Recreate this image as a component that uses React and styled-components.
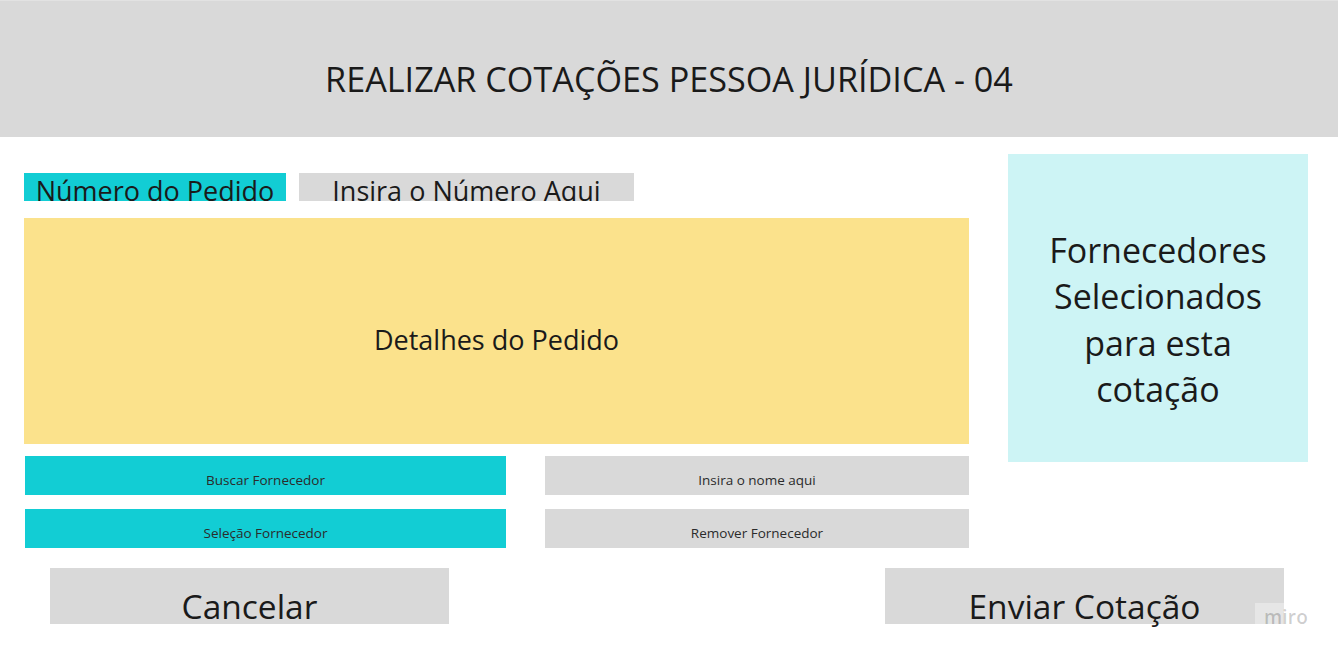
import React from "react";
import styled, { createGlobalStyle } from "styled-components";

const GlobalStyle = createGlobalStyle`
  html, body {
    margin: 0;
    padding: 0;
    background: #ffffff;
  }
  body {
    font-family: "Open Sans", "Noto Sans", sans-serif;
    color: #1a1a1a;
  }
  * { box-sizing: border-box; }
`;

const Page = styled.div`
  position: relative;
  width: 1338px;
  height: 656px;
  overflow: hidden;
  background: #ffffff;
`;

const Header = styled.header`
  height: 137px;
  background: #d9d9d9;
  border-top: 1px solid #e2e2e2;
  padding-top: 61px;
  text-align: center;
  font-size: 34.2px;
  line-height: 1;
  white-space: nowrap;
`;

const Content = styled.div`
  display: flex;
  align-items: flex-start;
  padding-left: 24px;
`;

const LeftColumn = styled.div`
  width: 945px;
  padding-top: 36px;
`;

const TopRow = styled.div`
  display: flex;
  gap: 13px;
  height: 28px;
`;

const Field = styled.div`
  width: ${(p) => p.$width}px;
  height: 28px;
  background: ${(p) => p.$bg};
  overflow: hidden;
  padding-top: 4px;
  font-size: 27px;
  line-height: 1;
  text-align: center;
  white-space: nowrap;
`;

const Details = styled.div`
  margin-top: 17px;
  height: 226px;
  background: #fbe28c;
  padding-top: 108px;
  font-size: 27px;
  line-height: 1;
  text-align: center;
`;

const ActionGrid = styled.div`
  display: grid;
  grid-template-columns: 481px 424px;
  grid-auto-rows: 38.5px;
  column-gap: 39px;
  row-gap: 14.5px;
  margin-top: 12px;
  padding-left: 1px;
`;

const ActionButton = styled.div`
  background: ${(p) => (p.$accent ? "#12cdd4" : "#d9d9d9")};
  padding-top: 18px;
  font-size: 13.5px;
  line-height: 1;
  color: #2b2b2b;
  text-align: center;
  white-space: nowrap;
`;

const SidePanel = styled.aside`
  width: 300px;
  height: 308px;
  margin-left: 39px;
  margin-top: 17px;
  background: #cdf4f5;
  padding-top: 73px;
  font-size: 34px;
  line-height: 46.3px;
  text-align: center;
`;

const Footer = styled.div`
  display: flex;
  justify-content: space-between;
  margin-top: 20px;
  padding: 0 54px 0 50px;
`;

const FooterButton = styled.div`
  width: 399px;
  height: 56px;
  background: #d9d9d9;
  padding-top: 22px;
  font-size: 33.5px;
  line-height: 1;
  text-align: center;
  white-space: nowrap;
`;

const Watermark = styled.div`
  position: absolute;
  left: 1255px;
  top: 603px;
  width: 56px;
  height: 34px;
  background: rgba(255, 255, 255, 0.35);
  padding-top: 5px;
  padding-left: 9px;
  font-size: 19px;
  font-weight: 600;
  line-height: 1;
  color: rgba(0, 0, 0, 0.2);
  letter-spacing: 0.2px;
`;

export default function App() {
  return (
    <Page>
      <GlobalStyle />
      <Header>REALIZAR COTAÇÕES PESSOA JURÍDICA - 04</Header>
      <Content>
        <LeftColumn>
          <TopRow>
            <Field $width={262} $bg="#12cdd4">Número do Pedido</Field>
            <Field $width={335} $bg="#d9d9d9">Insira o Número Aqui</Field>
          </TopRow>
          <Details>Detalhes do Pedido</Details>
          <ActionGrid>
            <ActionButton $accent>Buscar Fornecedor</ActionButton>
            <ActionButton>Insira o nome aqui</ActionButton>
            <ActionButton $accent>Seleção Fornecedor</ActionButton>
            <ActionButton>Remover Fornecedor</ActionButton>
          </ActionGrid>
        </LeftColumn>
        <SidePanel>
          Fornecedores
          <br />
          Selecionados
          <br />
          para esta
          <br />
          cotação
        </SidePanel>
      </Content>
      <Footer>
        <FooterButton>Cancelar</FooterButton>
        <FooterButton>Enviar Cotação</FooterButton>
      </Footer>
      <Watermark>miro</Watermark>
    </Page>
  );
}
